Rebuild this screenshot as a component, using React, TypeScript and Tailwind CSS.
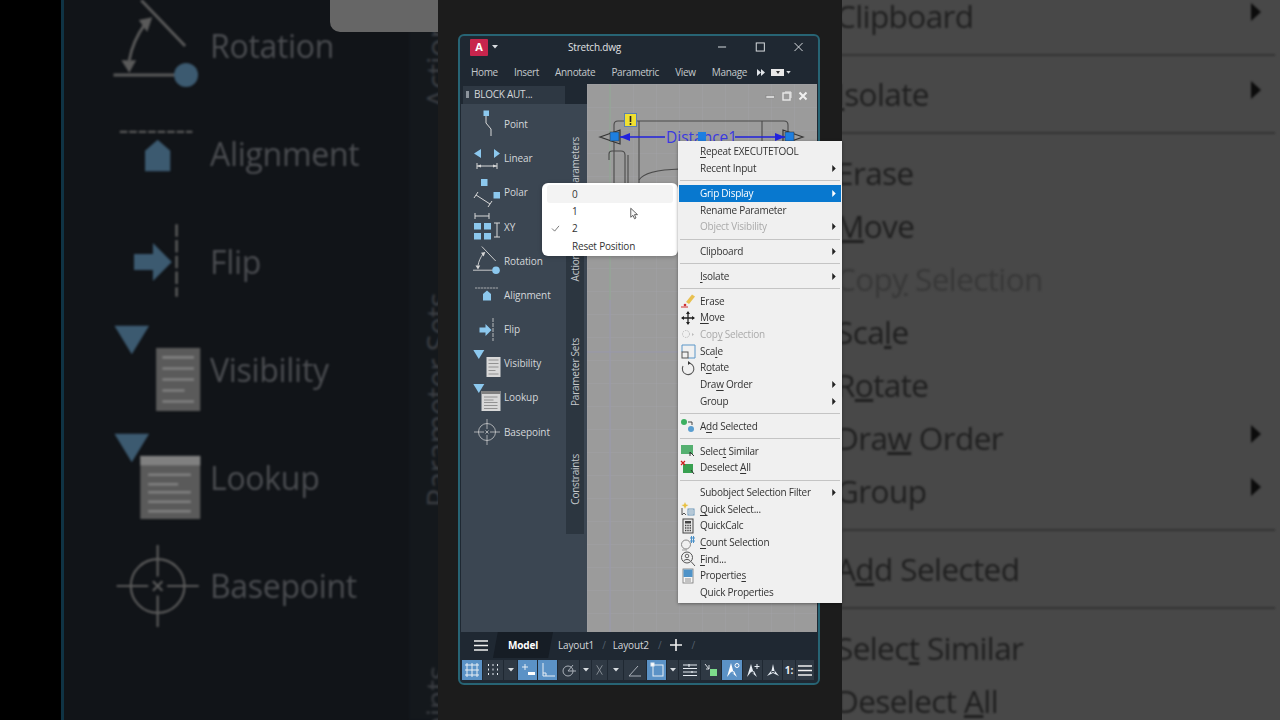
import React from "react";

const FONT = "font-['Open_Sans','Noto_Sans',sans-serif]";

type IC = { a: string; g: string };
const icons: Record<string, (c: IC) => React.ReactNode> = {
  Point: ({ a, g }) => (<>
    <rect x="13.5" y="3.5" width="5.5" height="5.5" fill={a} />
    <path d="M16 9V16L21 22V29" fill="none" stroke={g} strokeWidth="1" />
  </>),
  Linear: ({ a, g }) => (<>
    <path d="M4 11.5L11 7V16Z M24 7V16L30 11.5Z" fill={a} />
    <path d="M7 21V27M27 21V27M7 24H27" fill="none" stroke={g} strokeWidth="1" />
    <path d="M7 24L11 22.5V25.5Z M27 24L23 22.5V25.5Z" fill={g} />
  </>),
  Polar: ({ a, g }) => (<>
    <rect x="11" y="3" width="6.5" height="7" fill={a} />
    <rect x="23.5" y="16" width="6.5" height="6.5" fill={a} />
    <path d="M6 19L20 28M4 22L8 16M18 31L22 25" fill="none" stroke={g} strokeWidth="1" />
  </>),
  XY: ({ a, g }) => (<>
    <path d="M5 3V9M19 3V9M5 6H19M24 13H30M24 27H30M27 13V27" fill="none" stroke={g} strokeWidth="1" />
    <rect x="4" y="13" width="7" height="6.5" fill={a} />
    <rect x="14" y="13" width="7" height="6.5" fill={a} />
    <rect x="4" y="23" width="7" height="6.5" fill={a} />
    <rect x="14" y="23" width="7" height="6.5" fill={a} />
  </>),
  Rotation: ({ a, g }) => (<>
    <path d="M11.8 2.5L25.7 17M3 26.2H22.5M8 21.5C8.8 17 10.5 13.5 13 10" fill="none" stroke={g} strokeWidth="0.9" />
    <path d="M5.5 21.5H10.2L8 25.5Z M15.3 7.9L11 8.8L13.7 12.6Z" fill={g} />
    <circle cx="26" cy="26.2" r="3.8" fill={a} />
  </>),
  Alignment: ({ a, g }) => (<>
    <path d="M5 10H28" fill="none" stroke={g} strokeWidth="0.7" strokeDasharray="2.4 0.6" />
    <path d="M13 22.5V16L17 12.5L21 16V22.5Z" fill={a} />
  </>),
  Flip: ({ a, g }) => (<>
    <path d="M9.5 14.5H15.5V11L21.5 17L15.5 23V19.5H9.5Z" fill={a} />
    <path d="M23 5V28" fill="none" stroke={g} strokeWidth="0.8" strokeDasharray="4 1" />
  </>),
  Visibility: ({ a, g }) => (<>
    <path d="M3.3 3H14.3L8.8 12Z" fill={a} />
    <rect x="16.5" y="10" width="14" height="20" fill={g} />
    <path d="M18.5 13H28.5M18.5 16.5H28.5M18.5 20H28.5M18.5 23.5H25.5M18.5 27H28.5" stroke="#808080" strokeWidth="0.8" />
  </>),
  Lookup: ({ a, g }) => (<>
    <path d="M3.3 3H14.3L8.8 12Z" fill={a} />
    <rect x="11.5" y="10" width="19" height="20" fill={g} />
    <rect x="11.5" y="10" width="19" height="3" fill="#808080" />
    <path d="M14 16H27.5M14 19H23.5M14 21.5H27.5M14 24.5H27.5M14 27.5H27.5" stroke="#808080" strokeWidth="0.8" />
  </>),
  Basepoint: ({ g }) => (<>
    <circle cx="17" cy="17" r="8.5" fill="none" stroke={g} strokeWidth="0.7" />
    <path d="M4 17H14M20 17H30M17 4V14M17 20V30M15.5 15.5L18.5 18.5M18.5 15.5L15.5 18.5" fill="none" stroke={g} strokeWidth="0.7" />
  </>),
};

const names = ["Point", "Linear", "Polar", "XY", "Rotation", "Alignment", "Flip", "Visibility", "Lookup", "Basepoint"];

type Row =
  | { sep: true }
  | { label: React.ReactNode; arrow?: boolean; dim?: boolean; hi?: boolean; icon?: React.ReactNode; sep?: false };

const U = ({ children }: { children: React.ReactNode }) => <span className="underline underline-offset-2">{children}</span>;

const s16 = (c: React.ReactNode) => <svg viewBox="0 0 16 16" className="w-[16px] h-[16px]">{c}</svg>;

const menu: Row[] = [
  { label: <><U>R</U>epeat EXECUTETOOL</> },
  { label: "Recent Input", arrow: true },
  { sep: true },
  { label: "Grip Display", arrow: true, hi: true },
  { label: "Rename Parameter" },
  { label: "Object Visibility", arrow: true, dim: true },
  { sep: true },
  { label: "Clipboard", arrow: true },
  { sep: true },
  { label: <><U>I</U>solate</>, arrow: true },
  { sep: true },
  { label: "Erase", icon: s16(<><path d="M6 9L12 1.5L15 3.5L9 11Z" fill="#e8c050" /><path d="M1 14H8" stroke="#d03030" strokeWidth="1" /><circle cx="5" cy="12" r="1.3" fill="#d03030" /></>) },
  { label: <><U>M</U>ove</>, icon: s16(<><path d="M8 2V14M2 8H14" stroke="#222" strokeWidth="1.3" /><path d="M8 1L10 4H6ZM8 15L10 12H6ZM1 8L4 6V10ZM15 8L12 6V10Z" fill="#222" /></>) },
  { label: <>Cop<U>y</U> Selection</>, dim: true, icon: s16(<><circle cx="6" cy="7" r="3.5" fill="none" stroke="#bbb" strokeWidth="1" strokeDasharray="1.5 1" /><path d="M12 6L14 7.5L12 9Z" fill="#bbb" /></>) },
  { label: <>Sca<U>l</U>e</>, icon: s16(<><path d="M2 9V2H15V15H8" fill="none" stroke="#5a96c8" strokeWidth="1" /><rect x="2" y="9" width="6" height="6" fill="none" stroke="#555" strokeWidth="1" /></>) },
  { label: <>R<U>o</U>tate</>, icon: s16(<><path d="M8 3A5.8 5.8 0 1 1 3 6" fill="none" stroke="#555" strokeWidth="1.1" /><path d="M8 1L10.5 3L8 5Z" fill="#333" /></>) },
  { label: <>Dra<U>w</U> Order</>, arrow: true },
  { label: "Group", arrow: true },
  { sep: true },
  { label: <>A<U>d</U>d Selected</>, icon: s16(<><circle cx="4" cy="4" r="3" fill="#3cb060" /><circle cx="11" cy="11" r="3" fill="#5a9ed0" /><path d="M8 4H12V7" fill="none" stroke="#333" strokeWidth="0.9" /></>) },
  { sep: true },
  { label: <>Selec<U>t</U> Similar</>, icon: s16(<><rect x="1" y="2" width="12" height="9" fill="#55b070" /><path d="M10 9L14 13M10 9V13" stroke="#333" strokeWidth="1" /></>) },
  { label: <>Deselect <U>A</U>ll</>, icon: s16(<><rect x="3" y="4" width="10" height="9" fill="#38a050" /><path d="M1 1L5 5M5 1L1 5" stroke="#d02020" strokeWidth="1.2" /><path d="M11 10L14 14" stroke="#333" strokeWidth="1" /></>) },
  { sep: true },
  { label: "Subobject Selection Filter", arrow: true },
  { label: <><U>Q</U>uick Select...</>, icon: s16(<><path d="M5 1L6 3.5L8.5 4L6 5.5L5 8L4 5.5L1.5 4L4 3.5Z" fill="#e8c040" /><path d="M2 7V14L4 12L6 14" fill="none" stroke="#444" strokeWidth="0.9" /><rect x="8" y="8" width="6" height="6" fill="none" stroke="#5a8ab0" strokeWidth="0.9" /><path d="M9 10H13M9 12H13" stroke="#5a8ab0" strokeWidth="0.8" /></>) },
  { label: "QuickCalc", icon: s16(<><rect x="3" y="1" width="10" height="14" fill="#e8e8e8" stroke="#444" strokeWidth="1" /><rect x="5" y="3" width="6" height="2.5" fill="#444" /><path d="M5 7.5H11M5 10H11M5 12.5H11" stroke="#444" strokeWidth="1.3" strokeDasharray="1.4 0.9" /></>) },
  { label: <><U>C</U>ount Selection</>, icon: s16(<><circle cx="6" cy="9.5" r="4.5" fill="none" stroke="#888" strokeWidth="1" /><path d="M10 3H15M10 6H15M11.5 1V8M13.5 1V8" stroke="#4a90c8" strokeWidth="1" /><path d="M2 15H7" stroke="#888" strokeWidth="0.8" /></>) },
  { label: <><U>F</U>ind...</>, icon: s16(<><circle cx="7" cy="6.5" r="5.5" fill="none" stroke="#555" strokeWidth="1" /><circle cx="7" cy="5" r="1.8" fill="none" stroke="#555" strokeWidth="0.9" /><path d="M3.8 10C4.5 8 9.5 8 10.2 10M11 10.5L15 15" fill="none" stroke="#555" strokeWidth="1" /></>) },
  { label: <>Propertie<U>s</U></>, icon: s16(<><rect x="3" y="1" width="10" height="14" fill="#f5f5f5" stroke="#777" strokeWidth="0.8" /><rect x="3.5" y="1.5" width="9" height="7.5" fill="#4f93c8" /><path d="M5 11H11M5 13H11" stroke="#777" strokeWidth="0.8" /></>) },
  { label: "Quick Properties" },
];

function PaletteRow({ n }: { n: string }) {
  return (
    <div className="h-[34.2px] flex items-center">
      <svg viewBox="0 0 32 34" className="w-[32px] h-[34px] shrink-0">{icons[n]({ a: "#8cc8ee", g: "#d8d8d8" })}</svg>
      <span className="ml-[2px] text-[10px] tracking-[-0.1px] text-[#d4d7da]">{n}</span>
    </div>
  );
}

function BigRow({ n }: { n: string }) {
  return (
    <div className="h-[108px] flex items-center">
      <svg viewBox="0 0 32 34" className="w-[101px] h-[108px] shrink-0">{icons[n]({ a: "#3c5a70", g: "#5a5a5a" })}</svg>
      <span className="ml-[5px] text-[32px] tracking-[-0.3px] text-[#4b4d51]">{n}</span>
    </div>
  );
}

function Tri({ c = "#222" }: { c?: string }) {
  return <svg viewBox="0 0 4 8" className="w-[4px] h-[7px]"><path d="M0 0L4 4L0 8Z" fill={c} /></svg>;
}

function Status({ w, on, children }: { w: string; on?: boolean; children: React.ReactNode }) {
  return <div className={`${w} h-[20px] flex items-center justify-center shrink-0 ${on ? "bg-[#5b92c6]" : "bg-[#2f3944]"}`}>{children}</div>;
}

const Caret = () => <svg viewBox="0 0 6 4" className="w-[6px] h-[4px]"><path d="M0 0H6L3 3.5Z" fill="#d8dce0" /></svg>;

const si = (c: React.ReactNode) => <svg viewBox="0 0 16 16" className="w-[16px] h-[16px]" fill="none" stroke="#e8eef4" strokeWidth="1">{c}</svg>;

export default function App() {
  return (
    <div className={`w-[1280px] h-[720px] flex overflow-hidden ${FONT}`}>
      {/* left blurred zoom */}
      <div className="relative w-[438px] h-[720px] shrink-0 flex overflow-hidden bg-[#111418]">
        <div className="w-[61px] shrink-0 bg-black" />
        <div className="w-[3px] shrink-0 bg-[#0f3344]" />
        <div className="w-[345px] shrink-0 pl-[40px] -mt-[8px] blur-[1px]">
          {names.slice(4).map((n) => <BigRow key={n} n={n} />)}
        </div>
        <div className="w-[57px] shrink-0 bg-[#14181c] -mt-[111px] blur-[1px] text-[31px] tracking-[-0.5px] text-[#3a3d42]">
          {[["Actions", "h-[337px]"], ["Parameter Sets", "h-[348px]"], ["Constraints", "h-[345px]"]].map(([t, h]) => (
            <div key={t} className={`${h} flex items-center justify-center`}>
              <span className="[writing-mode:vertical-rl] rotate-180 whitespace-nowrap">{t}</span>
            </div>
          ))}
        </div>
        <div className="absolute left-[330px] top-0 w-[108px] h-[32px] bg-[#666666] rounded-bl-[10px] blur-[0.5px]" />
      </div>

      {/* center */}
      <div className="w-[404px] h-[720px] shrink-0 bg-[#1c1c1c] pt-[34px] pl-[20px] relative blur-[0.3px]">
        <div className="relative w-[362px] h-[651px] border-2 border-[#276474] rounded-[6px] bg-[#1f2832] flex flex-col">
          {/* title */}
          <div className="h-[26px] flex items-center shrink-0 pb-[4px]">
            <div className="ml-[10px] w-[18px] h-[17px] bg-[#c8254d] rounded-[1px] flex items-center justify-center text-white text-[11px] font-bold">A</div>
            <svg viewBox="0 0 6 4" className="ml-[4px] w-[6px] h-[4px]"><path d="M0 0H6L3 3.5Z" fill="#d8dce0" /></svg>
            <span className="ml-[70px] text-[10px] tracking-[-0.2px] text-[#e0e2e4]">Stretch.dwg</span>
            <svg viewBox="0 0 100 14" className="ml-auto mr-[10px] w-[90px] h-[14px]" fill="none" stroke="#d8dce0" strokeWidth="1.1">
              <path d="M0 7H9" />
              <rect x="42.5" y="2.5" width="9" height="9" />
              <path d="M85 2.5L94 11.5M94 2.5L85 11.5" />
            </svg>
          </div>
          {/* menu */}
          <div className="h-[22px] shrink-0 flex items-center pl-[11px] pb-[2px] gap-[16.2px] text-[10px] tracking-[-0.35px] text-[#c4c8cc]">
            <span>Home</span><span>Insert</span><span>Annotate</span><span>Parametric</span><span>View</span><span>Manage</span>
            <div className="flex items-center -ml-[6px]">
              <svg viewBox="0 0 8 7" className="w-[8px] h-[7px]"><path d="M0 0L4 3.5L0 7ZM4 0L8 3.5L4 7Z" fill="#e0e4e8" /></svg>
              <div className="ml-[6px] w-[13px] h-[7px] bg-[#e8e8e8] flex items-center justify-center"><svg viewBox="0 0 4 3" className="w-[4px] h-[3px]"><path d="M0 0H4L2 3Z" fill="#333" /></svg></div>
              <svg viewBox="0 0 6 4" className="ml-[2px] w-[5px] h-[3px]"><path d="M0 0H6L3 3.5Z" fill="#d8dce0" /></svg>
            </div>
          </div>
          {/* body */}
          <div className="h-[548px] shrink-0 flex pr-[1px]">
            <div className="w-[127px] shrink-0 flex flex-col">
              <div className="h-[20px] shrink-0 pt-[2px] pl-[3px]">
                <div className="w-[102px] h-[18px] bg-[#2e3843] flex items-center pl-[3px] pb-[1px] text-[10px] tracking-[-0.25px] text-[#d4d7da]">
                  <span className="w-[3px] h-[7px] bg-[#8c949c] mr-[5px]" />BLOCK AUT...
                </div>
              </div>
              <div className="flex-1 flex ml-[1px] bg-[#3b4652]">
                <div className="w-[105px] shrink-0 pt-[3.4px] pl-[9px]">
                  {names.map((n) => <PaletteRow key={n} n={n} />)}
                </div>
                <div className="w-[18px] shrink-0 text-[10px] tracking-[-0.25px] text-[#c4c8cc] flex flex-col mt-[2px] h-[428px]">
                  {[["Parameters", "h-[106px] pt-[8px]", ""], ["Actions", "h-[106px]", "bg-[#2c3640]"], ["Parameter Sets", "h-[107px]", "bg-[#2c3640]"], ["Constraints", "h-[109px]", "bg-[#2c3640]"]].map(([t, h, b]) => (
                    <div key={t} className={`${h} ${b} flex items-center justify-center`}>
                      <span className="[writing-mode:vertical-rl] rotate-180 whitespace-nowrap">{t}</span>
                    </div>
                  ))}
                </div>
              </div>
            </div>
            <div className="flex-1 bg-[#9b9b9b] overflow-hidden">
              <svg viewBox="587 84 230 548" className="w-[230px] h-[548px] block">
                <defs>
                  <pattern id="g" x="587" y="84" width="23" height="23" patternUnits="userSpaceOnUse">
                    <path d="M0 0H23M0 0V23" stroke="#a1a1a6" strokeWidth="1" fill="none" />
                  </pattern>
                </defs>
                <rect x="587" y="84" width="230" height="548" fill="url(#g)" />
                <path d="M610 84V300" stroke="#8fa892" strokeWidth="1" />
                <path d="M610 300V632" stroke="#9898ac" strokeWidth="1" />
                <path d="M587 352H817" stroke="#9898ac" strokeWidth="1" />
                <g fill="none" stroke="#4a4a4a" strokeWidth="1.1">
                  <path d="M614 200V125Q614 121 618 121H784Q788 121 788 125V175" />
                  <path d="M639 121V190M762 121V175" />
                  <path d="M625 200V155Q625 151 621 151H612Q609 151 609 154V160" />
                  <path d="M628 155V200" />
                  <path d="M639 180Q645 170 680 169" />
                </g>
                <path d="M600 137L620 130V144Z" fill="#9d9d9d" stroke="#333" strokeWidth="1.2" />
                <path d="M803 137L783 130V144Z" fill="#9d9d9d" stroke="#333" strokeWidth="1.2" />
                <path d="M620 137H665M735 137H785" stroke="#2222dd" strokeWidth="1.4" />
                <path d="M620 137L630 133V141ZM785 137L775 133V141Z" fill="#2222dd" />
                <text x="666" y="143" fontSize="15.5" fill="#3a3ae0">Distance1</text>
                <rect x="610" y="132" width="9" height="9" fill="#1e7fe0" stroke="#333" strokeWidth="0.5" />
                <rect x="698" y="132" width="8" height="9" fill="#1e7fe0" />
                <rect x="785" y="132" width="9" height="9" fill="#1e7fe0" stroke="#333" strokeWidth="0.5" />
                <rect x="624.5" y="113.5" width="12" height="13" fill="#f0e030" stroke="#5a7fb0" strokeWidth="1" />
                <path d="M630.5 116V122M630.5 123V125" stroke="#222" strokeWidth="1.6" />
                <g fill="none">
                  <rect x="766" y="95.5" width="8.5" height="3" fill="#d4d4d4" stroke="#777" strokeWidth="0.5" />
                  <rect x="783" y="93" width="7" height="7" stroke="#e8e8e8" strokeWidth="1.4" />
                  <path d="M785 92H791V98" stroke="#e8e8e8" strokeWidth="1" />
                  <path d="M799.5 92.5L806.5 99.5M806.5 92.5L799.5 99.5" stroke="#f0f0f0" strokeWidth="2" />
                </g>
              </svg>
            </div>
          </div>
          {/* tabs */}
          <div className="h-[26px] shrink-0 flex items-center text-[10px] tracking-[-0.15px] text-[#d4d7da]">
            <svg viewBox="0 0 14 11" className="ml-[14px] w-[14px] h-[11px]"><path d="M0 1H14M0 5.5H14M0 10H14" stroke="#f0f0f0" strokeWidth="1.5" /></svg>
            <div className="ml-[5px] w-[60px] h-[26px] bg-[#161d25] flex items-center justify-center font-bold text-white [clip-path:polygon(8%_0,100%_0,92%_100%,0_100%)]">Model</div>
            <span className="ml-[5px]">Layout1</span>
            <span className="ml-[8px] text-[#55606c]">/</span>
            <span className="ml-[7px]">Layout2</span>
            <span className="ml-[9px] text-[#55606c]">/</span>
            <svg viewBox="0 0 14 14" className="ml-[8px] w-[14px] h-[14px]"><path d="M7 1V13M1 7H13" stroke="#f0f0f0" strokeWidth="1.6" /></svg>
            <span className="ml-[8px] text-[#55606c]">/</span>
          </div>
          {/* status */}
          <div className="h-[22px] shrink-0 flex items-start pt-[2px] pl-[2px] gap-[1px]">
            <Status w="w-[20px]" on>{si(<path d="M3 1V15M8 1V15M13 1V15M1 3H15M1 8H15M1 13H15" />)}</Status>
            <Status w="w-[20px]">{si(<path d="M3 3H4M7.5 3H8.5M12 3H13M3 7.5H4M7.5 7.5H8.5M12 7.5H13M3 12H4M7.5 12H8.5M12 12H13" strokeWidth="1.8" />)}</Status>
            <Status w="w-[13px]"><Caret /></Status>
            <Status w="w-[19px]" on>{si(<><path d="M2 5H8M5 2V8" /><rect x="8" y="10" width="7" height="3" fill="#fff" stroke="none" /></>)}</Status>
            <Status w="w-[19px]" on>{si(<path d="M3 1V14H15M3 11H6V14" />)}</Status>
            <Status w="w-[21px]">{si(<g stroke="#aab0b8"><circle cx="7" cy="9" r="5" /><path d="M7 9H15M7 9L12 3" /></g>)}</Status>
            <Status w="w-[11px]"><Caret /></Status>
            <Status w="w-[15px]">{si(<path d="M5 3L11 13M11 3L5 13" stroke="#8a9098" />)}</Status>
            <Status w="w-[15px]"><Caret /></Status>
            <Status w="w-[22px]">{si(<path d="M2 14H14M2 14L11 4" stroke="#aab0b8" />)}</Status>
            <Status w="w-[19px]" on>{si(<><rect x="4" y="3" width="10" height="11" /><rect x="2" y="1" width="3" height="3" fill="#fff" /></>)}</Status>
            <Status w="w-[11px]"><Caret /></Status>
            <Status w="w-[21px]">{si(<path d="M1 3H15M1 6.5H15M1 10H15M1 13.5H15M7 2V5M10 9V11" strokeWidth="1.1" />)}</Status>
            <Status w="w-[20px]">{si(<><path d="M2 2L6 7M6 3V7H3" stroke="#d8dce0" /><rect x="7" y="7" width="7" height="7" fill="#7ddc8c" stroke="none" /></>)}</Status>
            <Status w="w-[20px]" on><svg viewBox="0 0 16 16" className="w-[16px] h-[16px]"><path d="M7 1L10 12L7 10L3 15Z M7 10L13 15L10 9Z" fill="#fff" /><circle cx="13" cy="3.5" r="2" fill="none" stroke="#fff" /></svg></Status>
            <Status w="w-[19px]"><svg viewBox="0 0 16 16" className="w-[16px] h-[16px]"><path d="M6 2L9 12L6 10L2 15Z M6 10L12 15L9 9Z" fill="#e8eef4" /><path d="M12 2V7M9.5 4.5H14.5" stroke="#e8eef4" strokeWidth="1" /></svg></Status>
            <Status w="w-[19px]"><svg viewBox="0 0 16 16" className="w-[16px] h-[16px]"><path d="M8 2L10 11L8 10L6 11Z M6 9L2 14L8 11L14 14L10 9Z" fill="#e8eef4" /></svg></Status>
            <Status w="w-[12px]"><span className="text-[10px] font-bold text-[#e8eef4]">1:</span></Status>
            <Status w="w-[18px]"><svg viewBox="0 0 14 11" className="w-[14px] h-[11px]"><path d="M0 1H14M0 5.5H14M0 10H14" stroke="#f0f0f0" strokeWidth="1.4" /></svg></Status>
          </div>
        </div>

        {/* submenu */}
        <div className="absolute left-[104px] top-[183px] w-[136px] h-[73px] bg-white rounded-[6px] shadow-[0_1px_4px_rgba(0,0,0,0.25)] pt-[2px] px-[5px] text-[10px] tracking-[-0.2px] text-[#333]">
          <div className="h-[18px] pl-[25px] flex items-center bg-[#f3f3f3] rounded-[3px]">0</div>
          <div className="h-[17px] pl-[25px] flex items-center">1</div>
          <div className="h-[17.5px] flex items-center">
            <svg viewBox="0 0 10 8" className="ml-[4px] w-[9px] h-[7px]"><path d="M1 4L4 7L9 1" fill="none" stroke="#555" strokeWidth="0.9" /></svg>
            <span className="ml-[12px]">2</span>
          </div>
          <div className="h-[17.5px] pl-[25px] flex items-center">Reset Position</div>
          <svg viewBox="0 0 12 16" className="absolute left-[88px] top-[24px] w-[9px] h-[13px]"><path d="M1 1V13L4 10.5L6 15L8 14L6 9.5H10Z" fill="#f8f8f8" stroke="#333" strokeWidth="1" /></svg>
        </div>

        {/* context menu */}
        <div className="absolute left-[240px] top-[141px] w-[164px] h-[462px] bg-[#f0f0f0] pt-[2.5px] text-[10px] tracking-[-0.25px] text-[#333] shadow-[0_1px_3px_rgba(0,0,0,0.4)]">
          {menu.map((r, i) =>
            r.sep ? (
              <div key={i} className="h-[8.15px] flex items-center pl-[2px]"><div className="w-[160px] h-[1px] bg-[#c4c4c4]" /></div>
            ) : (
              <div key={i} className={`h-[16.7px] flex items-center ml-[1px] w-[162px] ${r.hi ? "bg-[#0878cf] text-[#ffffff]" : r.dim ? "text-[#aaaaaa]" : ""}`}>
                <div className="w-[21px] shrink-0 flex items-center pl-[1px]">{r.icon}</div>
                <span className="flex-1 whitespace-nowrap">{r.label}</span>
                {r.arrow && <span className="mr-[5px] flex"><Tri c={r.hi ? "#fff" : "#222"} /></span>}
              </div>
            ),
          )}
        </div>
      </div>

      {/* right blurred zoom */}
      <div className="flex-1 h-[720px] bg-[#484848] overflow-hidden text-[31.5px] tracking-[-0.6px] text-[#1f1f1f]">
        <div className="-mt-[11px] -ml-[6px] w-[444px] blur-[1px]">
          {menu.slice(7).map((r, i) =>
            r.sep ? (
              <div key={i} className="h-[25.5px] flex items-center pr-[5px]"><div className="w-full h-[2px] bg-[#333333]" /></div>
            ) : (
              <div key={i} className={`h-[53px] flex items-center justify-between ${r.dim ? "text-[#383838]" : ""}`}>
                <span className="whitespace-nowrap">{r.label}</span>
                {r.arrow && <svg viewBox="0 0 10 18" className="mr-[19px] w-[10px] h-[18px] -mt-[8px]"><path d="M0 0L10 9L0 18Z" fill="#0c0c0c" /></svg>}
              </div>
            ),
          )}
        </div>
      </div>
    </div>
  );
}
